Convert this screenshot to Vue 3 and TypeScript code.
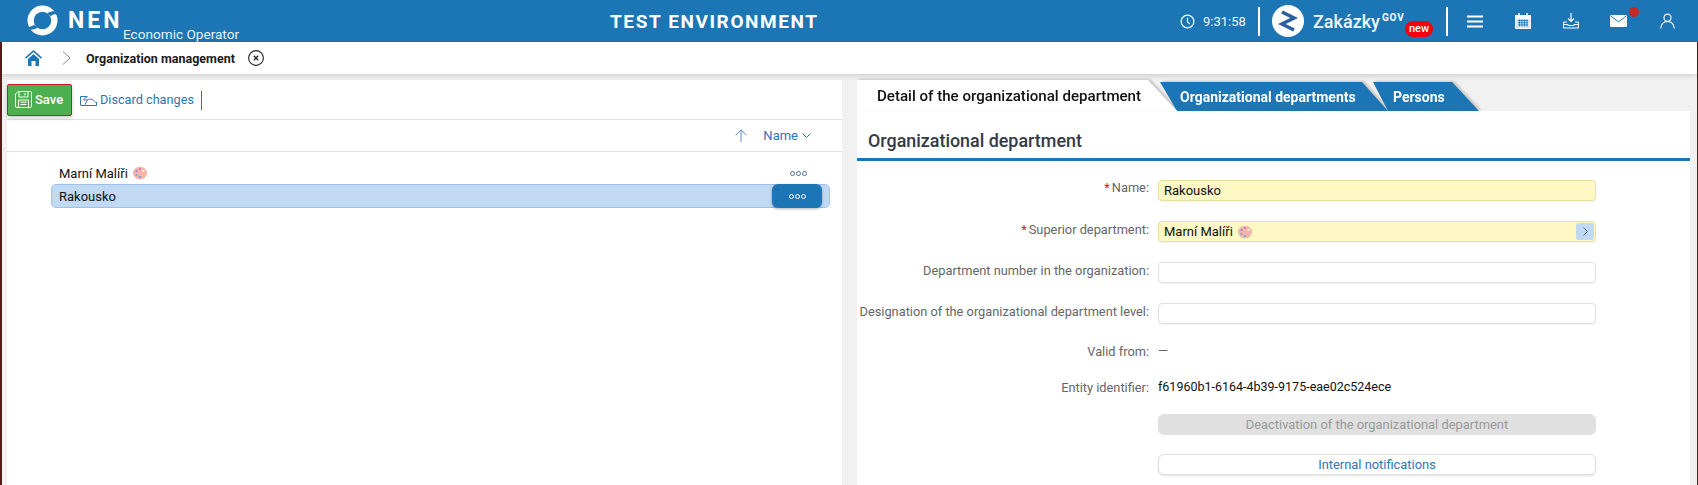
<script setup lang="ts">
interface Field { label: string; required?: boolean; value?: string; kind: 'required' | 'lookup' | 'input' | 'dash' | 'text' }
const fields: Field[] = [
  { label: 'Name', required: true, value: 'Rakousko', kind: 'required' },
  { label: 'Superior department', required: true, value: 'Marní Malíři', kind: 'lookup' },
  { label: 'Department number in the organization', kind: 'input' },
  { label: 'Designation of the organizational department level', kind: 'input' },
  { label: 'Valid from', value: '—', kind: 'dash' },
  { label: 'Entity identifier', value: 'f61960b1-6164-4b39-9175-eae02c524ece', kind: 'text' },
]
</script>

<template>
  <div class="page">
    <header class="top">
      <div class="brand">
        <svg class="logo" viewBox="0 0 32 32">
          <circle cx="16" cy="16" r="15.500" fill="#fff" />
          <ellipse cx="16" cy="16" rx="9" ry="9" fill="#1c75b4" />
          <path d="M21 8.500C24.500 6.500 28 6 32 7l0 3c-3-.8-5.500-.2-7.500 1.500z" fill="#1c75b4" />
          <path d="M11 23.500C7.500 25.500 4 26 0 25l0-3c3 .8 5.500.2 7.500-1.500z" fill="#1c75b4" />
        </svg>
        <span class="nen">NEN</span>
        <span class="role">Economic Operator</span>
      </div>
      <div class="env">TEST ENVIRONMENT</div>
      <div class="tools">
        <svg class="clock" viewBox="0 0 16 16" fill="none" stroke="#fff" stroke-width="1.300">
          <circle cx="8" cy="8" r="6.800" /><path d="M8 4v4.300l2.500 2.500" />
        </svg>
        <span class="time">9:31:58</span>
        <span class="sep sep-a"></span>
        <svg class="zlogo" viewBox="0 0 32 32">
          <circle cx="16" cy="16" r="16" fill="#fff" />
          <path d="M10 7l12 6-12 6 12 6" fill="none" stroke="#2b5f9e" stroke-width="3.600" />
        </svg>
        <span class="zak">Zakázky</span>
        <span class="gov">GOV</span>
        <span class="new">new</span>
        <span class="sep sep-b"></span>
        <svg class="ic burger" viewBox="0 0 16 13" fill="none" stroke="#fff" stroke-width="1.800">
          <path d="M0 1.500h16M0 6.500h16M0 11.500h16" />
        </svg>
        <svg class="ic cal" viewBox="0 0 16 16" fill="none" stroke="#fff">
          <path d="M.5 2.500h15v13H.5z" fill="#d5e6f3" /><path d="M.5 2.500h15v3H.5z" fill="#fff" />
          <path d="M4 0v3M12 0v3" stroke-width="1.500" />
          <path d="M3 7.500h10M3 9.700h10M3 11.900h10M4.500 6.500v7M7 6.500v7M9.500 6.500v7M12 6.500v7" stroke="#1c75b4" stroke-width=".8" />
        </svg>
        <svg class="ic down" viewBox="0 0 16 16" fill="none" stroke="#fff" stroke-width="1.200">
          <path d="M8 0v8M5 5.500L8 8.500l3-3" />
          <path d="M4 9H1.500a1 1 0 0 0-1 1v4a1 1 0 0 0 1 1h13a1 1 0 0 0 1-1v-4a1 1 0 0 0-1-1H12M.5 11.500h4l1 1h5l1-1h4" />
        </svg>
        <span class="mailbox">
          <svg class="mail" viewBox="0 0 17 12">
            <rect width="17" height="12" rx="1" fill="#fff" />
            <path d="M.5 .8l8 6 8-6" fill="none" stroke="#1c75b4" stroke-width="1" />
          </svg>
          <i class="dot"></i>
        </span>
        <svg class="ic user" viewBox="0 0 16 16" fill="none" stroke="#fff" stroke-width="1.200">
          <circle cx="8" cy="4.500" r="3.800" /><path d="M.8 16c.3-4.500 3-7.500 7.200-7.500s6.900 3 7.200 7.500" />
        </svg>
      </div>
    </header>

    <div class="shell">
      <nav class="crumbs">
        <svg class="home" viewBox="0 0 17 16">
          <path d="M8.500 0L0 7.500l1 1.200 7.500-6.700L16 8.700l1-1.200z" fill="#1c75b4" />
          <path d="M3 9L8.500 4 14 9v7h-3.500v-5h-4v5H3z" fill="#1c75b4" />
        </svg>
        <svg class="crumb-chev" viewBox="0 0 9 14" fill="none" stroke="#888" stroke-width="1">
          <path d="M1 .5L8 7 1 13.500" />
        </svg>
        <span class="crumb">Organization management</span>
        <svg class="close" viewBox="0 0 16 16" fill="none" stroke="#222" stroke-width="1.100">
          <circle cx="8" cy="8" r="7.400" /><path d="M5.800 5.800l4.400 4.400M10.200 5.800l-4.400 4.400" stroke-width="1.300" />
        </svg>
      </nav>

      <main class="content">
        <section class="left">
          <div class="toolbar">
            <button class="save">
              <svg class="save-ic" viewBox="0 0 17 17" fill="none" stroke="#fff" stroke-width="1">
                <path d="M3 .5h12.500a1 1 0 0 1 1 1V15a1.500 1.500 0 0 1-1.500 1.500H2A1.500 1.500 0 0 1 .5 15V3z" />
                <path d="M4 .5v5.500h9V.5M10 2v2.500M3.500 16.500V9h10v7.500M5.500 11.200h6M5.500 13.500h6" />
              </svg>
              Save
            </button>
            <span class="discard">
              <svg class="discard-ic" viewBox="0 0 17 11" fill="none" stroke="#2a76b6" stroke-width="1">
                <path d="M.5 10.500V1.500h6.500" />
                <path d="M1 10.500h15.500V7" />
                <path d="M5 9.500l2.500-4.500H4l-.5-.5 4-3" stroke="#4d6fc0" />
                <path d="M7.500 4.500c3-1 6.500 0 8 3" stroke="#4d6fc0" />
              </svg>
              Discard changes
            </span>
            <span class="bar"></span>
          </div>
          <div class="sortrow">
            <svg class="up" viewBox="0 0 12 13" fill="none" stroke="#5d8fc4" stroke-width="1">
              <path d="M6 13V.8M.5 6.300L6 .8l5.500 5.500" />
            </svg>
            <span class="sortname">Name</span>
            <svg class="sortchev" viewBox="0 0 9 5" fill="none" stroke="#2a76b6" stroke-width="1">
              <path d="M.5 .5l4 4 4-4" />
            </svg>
          </div>
          <div class="tree">
            <div class="row">
              <span>Marní Malíři</span>
              <svg class="palette" viewBox="0 0 14 14">
                <ellipse cx="7" cy="7" rx="7" ry="6.300" fill="#f4b5a8" />
                <circle cx="7" cy="3" r="1.100" fill="#e868c8" /><circle cx="3.500" cy="5" r="1.100" fill="#a080e0" />
                <circle cx="3.500" cy="9" r="1.100" fill="#60b0d8" /><circle cx="7" cy="11" r="1.100" fill="#60a0e0" />
                <circle cx="10.500" cy="5" r="1.100" fill="#fff" />
              </svg>
              <span class="dots dark">
                <i></i><i></i><i></i>
              </span>
            </div>
            <div class="row selected">
              <span>Rakousko</span>
              <button class="more"><span class="dots"><i></i><i></i><i></i></span></button>
            </div>
          </div>
        </section>

        <section class="right">
          <div class="tabs">
            <div class="tab active"><span>Detail of the organizational department</span></div>
            <div class="tab second"><span>Organizational departments</span></div>
            <div class="tab third"><span>Persons</span></div>
          </div>
          <div class="panel">
            <h2 class="title">Organizational department</h2>
            <div class="form">
              <div v-for="f in fields" :key="f.label" class="frow" :class="'k-' + f.kind">
                <label class="lab"><em v-if="f.required">*</em>{{ f.label }}:</label>
                <div v-if="f.kind === 'required'" class="inp yellow">{{ f.value }}</div>
                <div v-else-if="f.kind === 'lookup'" class="inp yellow">
                  {{ f.value }}
                  <svg class="palette" viewBox="0 0 14 14">
                    <ellipse cx="7" cy="7" rx="7" ry="6.300" fill="#f4b5a8" />
                    <circle cx="7" cy="3" r="1.100" fill="#e868c8" /><circle cx="3.500" cy="5" r="1.100" fill="#a080e0" />
                    <circle cx="3.500" cy="9" r="1.100" fill="#60b0d8" /><circle cx="7" cy="11" r="1.100" fill="#60a0e0" />
                    <circle cx="10.500" cy="5" r="1.100" fill="#fff" />
                  </svg>
                  <span class="pick">
                    <svg viewBox="0 0 5 9" fill="none" stroke="#4a6fa8" stroke-width="1"><path d="M.5 .5l4 4-4 4" /></svg>
                  </span>
                </div>
                <div v-else-if="f.kind === 'input'" class="inp"></div>
                <div v-else-if="f.kind === 'dash'" class="val dash">{{ f.value }}</div>
                <div v-else class="val">{{ f.value }}</div>
              </div>
              <div class="frow k-btn"><span class="lab"></span><button class="wide off">Deactivation of the organizational department</button></div>
              <div class="frow k-btn2"><span class="lab"></span><button class="wide">Internal notifications</button></div>
            </div>
          </div>
        </section>
      </main>
    </div>
  </div>
</template>

<style>
html, body { margin: 0; background: #f1f1f1; overflow: hidden; }
</style>

<style scoped>
.page { width: 1698px; height: 485px; display: flex; flex-direction: column; overflow: hidden; font-family: Roboto, "Liberation Sans", sans-serif; background: #f1f1f1; position: relative; }
.top { height: 42px; flex: none; background: #1c75b4; color: #fff; display: flex; align-items: center; }
.brand { display: flex; align-items: flex-start; padding-left: 27px; height: 42px; width: 583px; flex: none; }
.logo { width: 31px; height: 31px; margin-top: 5px; flex: none; }
.nen { font: 700 23px/24px Roboto, sans-serif; letter-spacing: 3px; margin: 9px 0 0 10px; width: 56px; }
.role { font-size: 13.600px; line-height: 16px; margin: 26px 0 0 -1px; white-space: nowrap; color: #e6f2fa; }
.env { font-size: 19px; font-weight: 700; letter-spacing: 1.600px; white-space: nowrap; }
.tools { display: flex; align-items: center; height: 42px; position: absolute; left: 1180px; top: 0; width: 518px; }
.clock { width: 15px; height: 15px; flex: none; }
.time { font-size: 13px; margin-left: 8px; width: 42px; color: #eef6fb; white-space: nowrap; }
.sep { width: 2px; height: 29px; background: #fff; flex: none; }
.sep-a { margin-left: 13px; }
.zlogo { width: 32px; height: 32px; margin-left: 12px; flex: none; }
.zak { font-size: 18px; font-weight: 500; margin-left: 9px; color: #eef6fb; width: 65px; white-space: nowrap; }
.gov { font-size: 10px; font-weight: 700; letter-spacing: .8px; margin: -8px 0 0 4px; width: 23px; white-space: nowrap; }
.new { background: #f5000e; font-size: 11px; font-weight: 500; border-radius: 8px; height: 16px; line-height: 16px; width: 28px; text-align: center; margin: 16px 0 0 0; flex: none; }
.sep-b { margin-left: 13px; }
.ic { flex: none; }
.burger { width: 16px; height: 13px; margin-left: 19px; }
.cal { width: 16px; height: 16px; margin-left: 32px; }
.down { width: 16px; height: 16px; margin-left: 32px; }
.mailbox { position: relative; display: block; margin-left: 31px; width: 17px; height: 12px; flex: none; }
.mail { width: 17px; height: 12px; display: block; }
.dot { position: absolute; left: 19px; top: -8px; width: 10px; height: 10px; border-radius: 50%; background: #c62828; }
.user { width: 15px; height: 16px; margin-left: 33px; }

.shell { flex: 1; min-height: 0; display: flex; flex-direction: column; border-left: 2px solid #5c1a1a; border-right: 1px solid #5c1a1a; }
.crumbs { height: 32px; flex: none; background: #fff; display: flex; align-items: center; box-shadow: 0 2px 5px rgba(0, 0, 0, .14); position: relative; }
.home { width: 17px; height: 16px; margin-left: 23px; flex: none; }
.crumb-chev { width: 9px; height: 14px; margin-left: 20px; flex: none; }
.crumb { font-size: 12.500px; font-weight: 700; color: #1a1a1a; margin-left: 15px; white-space: nowrap; }
.close { width: 16px; height: 16px; margin-left: 13px; flex: none; }

.content { flex: 1; min-height: 0; display: flex; padding: 6px 7px 0 5px; gap: 15px; }
.left { width: 835px; flex: none; background: #fff; font-size: 13px; }
.toolbar { height: 39px; display: flex; align-items: flex-start; border-bottom: 1px solid #e0e0e0; }
.save { width: 65px; height: 32px; margin-top: 4px; box-sizing: border-box; background: #4caf50; border: 1px solid #d3172a; border-radius: 2px; color: #fff; font: 500 13px Roboto, sans-serif; display: flex; align-items: center; padding: 0 0 1px 7px; gap: 3px; box-shadow: 0 2px 4px rgba(0, 0, 0, .2); }
.save-ic { width: 17px; height: 17px; flex: none; }
.discard { display: flex; align-items: center; color: #2a76b6; font-size: 12.700px; margin: 12px 0 0 8px; line-height: 16px; }
.discard-ic { width: 17px; height: 11px; margin-right: 3px; }
.bar { width: 1px; height: 19px; background: #1c75b4; margin: 11px 0 0 7px; }
.sortrow { height: 31px; border-bottom: 1px solid #e0e0e0; display: flex; align-items: center; justify-content: flex-end; color: #2a76b6; padding-right: 31px; }
.up { width: 12px; height: 13px; }
.sortname { margin-left: 16px; font-size: 13px; }
.sortchev { width: 9px; height: 5px; margin-left: 4px; }
.tree { padding: 10px 12px 0 44px; }
.row { height: 22px; display: flex; align-items: center; padding: 0 8px; color: #111; font-size: 13px; position: relative; }
.palette { width: 14px; height: 14px; margin-left: 5px; flex: none; vertical-align: -2px; }
.selected { background: #c2d9f4; border: 1px solid #9cc0ea; border-radius: 5px; height: 24px; box-sizing: border-box; padding-left: 7px; }
.dots { display: flex; gap: 1px; }
.dots i { width: 3px; height: 3px; border: 1px solid #fff; border-radius: 50%; display: block; }
.dots.dark { position: absolute; right: 23px; }
.dots.dark i { border-color: #4a72a8; }
.more { position: absolute; right: 7px; top: -1px; width: 50px; height: 24px; background: #1c75b4; border: 0; border-radius: 6px; display: flex; align-items: center; justify-content: center; padding: 0; box-shadow: 0 1px 3px rgba(0, 0, 0, .3); }

.right { flex: 1; min-width: 0; display: flex; flex-direction: column; }
.tabs { height: 31px; flex: none; display: flex; align-items: flex-end; font-size: 14px; filter: drop-shadow(2px -1px 1px #c4c4c4); }
.tab { display: flex; align-items: center; white-space: nowrap; box-sizing: border-box; }
.active { width: 320px; height: 31px; background: #fff; clip-path: polygon(0 0, 291px 0, 100% 100%, 0 100%); padding-left: 20px; font-size: 15.100px; font-weight: 500; color: #111; margin-right: -17px; position: relative; z-index: 3; }
.second { width: 228px; height: 29px; background: #1c75b4; color: #fff; font-weight: 700; clip-path: polygon(0 0, 202px 0, 100% 100%, 17px 100%); padding-left: 20px; position: relative; z-index: 2; }
.third { width: 106px; height: 29px; background: #1c75b4; color: #fff; font-weight: 700; clip-path: polygon(0 0, 79px 0, 100% 100%, 15px 100%); padding-left: 20px; margin-left: -15px; position: relative; z-index: 1; }
.panel { flex: 1; min-height: 0; background: #fff; }
.title { margin: 0; height: 50px; box-sizing: border-box; padding-left: 11px; line-height: 60px; font-size: 17.900px; font-weight: 500; color: #333a45; border-bottom: 3px solid #1c75b4; }
.form { font-size: 13px; }
.frow { display: flex; align-items: center; }
.lab { width: 292px; flex: none; text-align: right; color: #666; white-space: nowrap; font-size: 12.800px; margin-right: 9px; }
.k-required .lab, .k-lookup .lab, .k-input .lab { padding-bottom: 4px; }
.k-required .lab { padding-bottom: 6px; }
.lab em { color: #d3172a; font-style: normal; margin-right: 2px; }
.inp { width: 438px; height: 21px; box-sizing: border-box; border: 1px solid #e0e0e0; border-radius: 4px; display: flex; align-items: center; padding-left: 5px; color: #111; position: relative; font-size: 13px; box-shadow: 0 1px 1px rgba(0, 0, 0, .05); }
.yellow { background: #fdf8c4; border-color: #e8dfa0; }
.pick { position: absolute; right: 1px; top: 1px; width: 18px; height: 17px; background: #c2d9f4; border-radius: 3px; display: flex; align-items: center; justify-content: center; }
.pick svg { width: 5px; height: 9px; }
.val { color: #111; font-size: 12.500px; line-height: 20px; }
.dash { color: #666; font-size: 13px; }
.k-required { margin-top: 19px; }
.k-lookup, .k-input { margin-top: 20px; }
.k-dash { margin-top: 17px; }
.k-text { margin-top: 16px; }
.k-btn { margin-top: 17px; }
.k-btn2 { margin-top: 19px; }
.wide { width: 438px; height: 21px; border: 1px solid #e0e0e0; background: #fff; border-radius: 6px; color: #2a76b6; font: 400 12.900px Roboto, sans-serif; padding: 0; box-shadow: 0 1px 2px rgba(0, 0, 0, .12); }
.off { background: #e0e0e0; border-color: #e0e0e0; color: #999; box-shadow: none; }
</style>
